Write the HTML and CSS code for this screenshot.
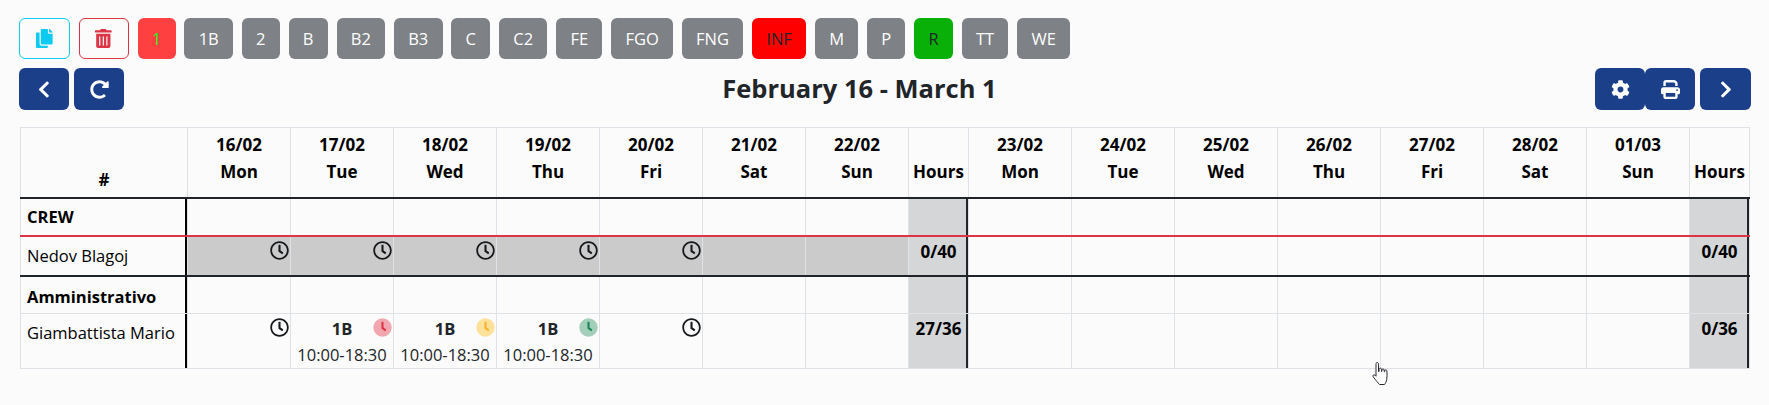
FILE: index.html
```html
<!DOCTYPE html>
<html lang="en">
<head>
  <meta charset="UTF-8">
  <meta name="viewport" content="width=device-width, initial-scale=1">
  <title>Shift planner</title>
  <link rel="stylesheet" href="styles.css">
</head>
<body>
  <svg class="sprite" xmlns="http://www.w3.org/2000/svg">
    <symbol id="i-clock" viewBox="0 0 512 512"><path d="M256 8C119 8 8 119 8 256s111 248 248 248 248-111 248-248S393 8 256 8zm0 448c-110.500 0-200-89.500-200-200S145.500 56 256 56s200 89.500 200 200-89.500 200-200 200zm61.800-104.400l-84.900-61.700c-3.100-2.300-4.900-5.900-4.900-9.700V116c0-6.600 5.400-12 12-12h32c6.600 0 12 5.400 12 12v141.700l66.800 48.600c5.400 3.900 6.500 11.400 2.600 16.800L334.600 349c-3.900 5.300-11.400 6.500-16.800 2.600z"/></symbol>
    <symbol id="i-dot" viewBox="0 0 512 512"><circle class="dot-bg" cx="256" cy="256" r="248"/><path class="dot-hands" d="M317.800 351.600l-84.900-61.700c-3.100-2.300-4.900-5.900-4.900-9.700V116c0-6.600 5.400-12 12-12h32c6.600 0 12 5.400 12 12v141.700l66.800 48.600c5.400 3.900 6.500 11.400 2.600 16.800L334.600 349c-3.900 5.300-11.400 6.500-16.800 2.600z"/></symbol>
  </svg>

  <div class="page">
    <div class="codes">
      <button class="btn btn-copy"><svg class="ico" viewBox="0 0 448 512"><path d="M320 448v40c0 13.255-10.745 24-24 24H24c-13.255 0-24-10.745-24-24V120c0-13.255 10.745-24 24-24h72v296c0 30.879 25.121 56 56 56h168zm0-344V0H152c-13.255 0-24 10.745-24 24v368c0 13.255 10.745 24 24 24h272c13.255 0 24-10.745 24-24V128H344c-13.200 0-24-10.800-24-24zm120.971-31.029L375.029 7.029A24 24 0 0 0 358.059 0H352v96h96v-6.059a24 24 0 0 0-7.029-16.970z"/></svg></button>
      <button class="btn btn-trash"><svg class="ico" viewBox="0 0 448 512"><path d="M32 464a48 48 0 0 0 48 48h288a48 48 0 0 0 48-48V128H32zm272-256a16 16 0 0 1 32 0v224a16 16 0 0 1-32 0zm-96 0a16 16 0 0 1 32 0v224a16 16 0 0 1-32 0zm-96 0a16 16 0 0 1 32 0v224a16 16 0 0 1-32 0zM432 32H312l-9.400-18.700A24 24 0 0 0 281.100 0H166.800a23.720 23.720 0 0 0-21.400 13.300L136 32H16A16 16 0 0 0 0 48v32a16 16 0 0 0 16 16h416a16 16 0 0 0 16-16V48a16 16 0 0 0-16-16z"/></svg></button>
      <button class="btn code code-one">1</button>
      <button class="btn code">1B</button>
      <button class="btn code">2</button>
      <button class="btn code">B</button>
      <button class="btn code">B2</button>
      <button class="btn code">B3</button>
      <button class="btn code">C</button>
      <button class="btn code">C2</button>
      <button class="btn code">FE</button>
      <button class="btn code">FGO</button>
      <button class="btn code">FNG</button>
      <button class="btn code code-inf">INF</button>
      <button class="btn code">M</button>
      <button class="btn code">P</button>
      <button class="btn code code-r">R</button>
      <button class="btn code">TT</button>
      <button class="btn code">WE</button>
    </div>

    <div class="nav">
      <div class="nav-group">
        <button class="btn btn-nav"><svg class="ico" viewBox="0 0 320 512"><path d="M34.520 239.030L228.870 44.690c9.370-9.370 24.570-9.370 33.940 0l22.670 22.670c9.360 9.360 9.370 24.520.04 33.900L131.490 256l154.020 154.750c9.340 9.380 9.320 24.540-.04 33.900l-22.670 22.670c-9.370 9.370-24.570 9.370-33.940 0L34.520 272.970c-9.370-9.370-9.370-24.570 0-33.940z"/></svg></button>
        <button class="btn btn-nav"><svg class="ico" viewBox="0 0 512 512"><path d="M256.455 8c66.269.119 126.437 26.233 170.859 68.685l35.715-35.715C478.149 25.851 504 36.559 504 57.941V192c0 13.255-10.745 24-24 24H345.941c-21.382 0-32.090-25.851-16.971-40.971l41.750-41.750c-30.864-28.899-70.801-44.907-113.230-45.273-92.398-.798-170.283 73.977-169.484 169.442C88.764 348.009 162.184 424 256 424c41.127 0 79.997-14.678 110.629-41.556 4.743-4.161 11.906-3.908 16.368.553l39.662 39.662c4.872 4.872 4.631 12.815-.482 17.433C378.202 479.813 319.926 504 256 504 119.034 504 8.001 392.967 8 256.002 7.999 119.193 119.646 7.755 256.455 8z"/></svg></button>
      </div>
      <h4 class="title">February 16 - March 1</h4>
      <div class="nav-group nav-right">
        <button class="btn btn-nav"><svg class="ico" viewBox="0 0 512 512"><path d="M487.400 315.700l-42.600-24.600c4.300-23.200 4.300-47 0-70.200l42.600-24.600c4.900-2.800 7.100-8.600 5.500-14-11.100-35.600-30-67.800-54.700-94.600-3.800-4.100-10-5.100-14.800-2.300L380.800 110c-17.900-15.400-38.500-27.300-60.800-35.100V25.800c0-5.600-3.900-10.500-9.400-11.700-36.700-8.200-74.300-7.800-109.200 0-5.500 1.200-9.400 6.100-9.400 11.700V75c-22.200 7.900-42.800 19.800-60.800 35.100L88.700 85.500c-4.900-2.800-11-1.900-14.800 2.300-24.700 26.700-43.600 58.900-54.700 94.600-1.700 5.400.6 11.200 5.500 14L67.300 221c-4.300 23.200-4.300 47 0 70.200l-42.600 24.600c-4.900 2.800-7.100 8.600-5.500 14 11.100 35.600 30 67.800 54.700 94.600 3.800 4.100 10 5.100 14.800 2.300l42.600-24.600c17.900 15.400 38.500 27.300 60.800 35.100v49.200c0 5.600 3.900 10.500 9.400 11.700 36.700 8.200 74.300 7.800 109.200 0 5.500-1.200 9.400-6.100 9.400-11.700v-49.200c22.200-7.900 42.800-19.800 60.800-35.100l42.600 24.600c4.900 2.800 11 1.900 14.800-2.300 24.700-26.700 43.600-58.900 54.700-94.600 1.500-5.500-.7-11.300-5.600-14.100zM256 336c-44.100 0-80-35.900-80-80s35.900-80 80-80 80 35.900 80 80-35.900 80-80 80z"/></svg></button>
        <button class="btn btn-nav"><svg class="ico" viewBox="0 0 512 512"><path d="M128 0C92.700 0 64 28.700 64 64v96h64V64H354.700L384 93.300V160h64V93.300c0-17-6.700-33.300-18.700-45.300L400 18.700C388 6.700 371.700 0 354.700 0H128zM384 352v32 64H128V384 368 352H384zm64 32h32c17.700 0 32-14.300 32-32V256c0-35.300-28.700-64-64-64H64c-35.300 0-64 28.700-64 64v96c0 17.700 14.300 32 32 32H64v64c0 35.300 28.700 64 64 64H384c35.300 0 64-28.700 64-64V384zM432 248a24 24 0 1 1 0 48 24 24 0 1 1 0-48z"/></svg></button>
        <button class="btn btn-nav btn-next"><svg class="ico" viewBox="0 0 320 512"><path d="M285.476 272.971L91.132 467.314c-9.373 9.373-24.569 9.373-33.941 0l-22.667-22.667c-9.357-9.357-9.375-24.522-.04-33.901L188.505 256 34.484 101.255c-9.335-9.379-9.317-24.544.04-33.901l22.667-22.667c9.373-9.373 24.569-9.373 33.941 0L285.475 239.030c9.373 9.372 9.373 24.568.001 33.941z"/></svg></button>
      </div>
    </div>

    <table class="planner">
      <colgroup>
        <col class="col-name">
        <col class="col-day"><col class="col-day"><col class="col-day"><col class="col-day"><col class="col-day"><col class="col-day"><col class="col-day">
        <col class="col-hours">
        <col class="col-day"><col class="col-day"><col class="col-day"><col class="col-day"><col class="col-day"><col class="col-day"><col class="col-day">
        <col class="col-hours-end">
      </colgroup>
      <thead>
        <tr>
          <th class="hash">#</th>
          <th>16/02<br>Mon</th><th>17/02<br>Tue</th><th>18/02<br>Wed</th><th>19/02<br>Thu</th><th>20/02<br>Fri</th><th>21/02<br>Sat</th><th>22/02<br>Sun</th>
          <th class="tot-head">Hours</th>
          <th>23/02<br>Mon</th><th>24/02<br>Tue</th><th>25/02<br>Wed</th><th>26/02<br>Thu</th><th>27/02<br>Fri</th><th>28/02<br>Sat</th><th>01/03<br>Sun</th>
          <th class="tot-head">Hours</th>
        </tr>
      </thead>
      <tbody>
        <tr class="group group-red">
          <td class="name">CREW</td>
          <td></td><td></td><td></td><td></td><td></td><td></td><td></td>
          <td class="tot"></td>
          <td></td><td></td><td></td><td></td><td></td><td></td><td></td>
          <td class="tot"></td>
        </tr>
        <tr class="person person-end">
          <td class="name">Nedov Blagoj</td>
          <td class="off"><svg class="clock"><use href="#i-clock"/></svg></td>
          <td class="off"><svg class="clock"><use href="#i-clock"/></svg></td>
          <td class="off"><svg class="clock"><use href="#i-clock"/></svg></td>
          <td class="off"><svg class="clock"><use href="#i-clock"/></svg></td>
          <td class="off"><svg class="clock"><use href="#i-clock"/></svg></td>
          <td class="off"></td><td class="off"></td>
          <td class="tot">0/40</td>
          <td></td><td></td><td></td><td></td><td></td><td></td><td></td>
          <td class="tot">0/40</td>
        </tr>
        <tr class="group group-low">
          <td class="name">Amministrativo</td>
          <td></td><td></td><td></td><td></td><td></td><td></td><td></td>
          <td class="tot"></td>
          <td></td><td></td><td></td><td></td><td></td><td></td><td></td>
          <td class="tot"></td>
        </tr>
        <tr class="person person-tall">
          <td class="name">Giambattista Mario</td>
          <td><svg class="clock"><use href="#i-clock"/></svg></td>
          <td><svg class="clock dot-red"><use href="#i-dot"/></svg><b class="shift">1B</b><span class="time">10:00-18:30</span></td>
          <td><svg class="clock dot-yellow"><use href="#i-dot"/></svg><b class="shift">1B</b><span class="time">10:00-18:30</span></td>
          <td><svg class="clock dot-green"><use href="#i-dot"/></svg><b class="shift">1B</b><span class="time">10:00-18:30</span></td>
          <td><svg class="clock"><use href="#i-clock"/></svg></td>
          <td></td><td></td>
          <td class="tot">27/36</td>
          <td></td><td></td><td></td><td></td><td></td><td></td><td></td>
          <td class="tot">0/36</td>
        </tr>
      </tbody>
    </table>
  </div>

  <svg class="pointer" viewBox="0 0 20 25"><path d="M6 1.500c1 0 1.500.7 1.500 1.700v7.300l.6-.1V8.200c0-1.500 2.200-1.500 2.300 0v2.200h.5V9c0-1.400 2.200-1.400 2.300 0v1.700h.5V9.800c.1-1.300 2.100-1.200 2.200.2.200 2.900.3 5.800-.2 8.500-.4 2.200-1.400 4-2.200 5H8.500c-1.500-1.700-3.200-3.600-6.300-7.700-.9-1.300.6-2.700 1.900-1.600l.9 1V3.200c0-1 .4-1.700 1-1.700z"/></svg>
</body>
</html>
```

FILE: styles.css
```css
* {
  box-sizing: border-box;
}
body {
  margin: 0;
  background: #fbfbfb;
  color: #212529;
  font-family: "Open Sans", "Noto Sans", sans-serif;
  font-size: 16.5px;
}
.sprite {
  display: none;
}
.page {
  padding: 18px 18px 0 19px;
  width: 1769px;
}

/* toolbar */
.codes {
  display: flex;
  gap: 8.8px;
}
.btn {
  height: 41px;
  min-width: 38px;
  border: 0;
  border-radius: 6px;
  font: inherit;
  padding: 0 14.25px;
  display: flex;
  align-items: center;
  justify-content: center;
}
.ico {
  height: 19px;
  fill: currentColor;
  display: block;
}
.code {
  background: #7e8185;
  color: #fff;
}
.code-one {
  background: #ff4040;
  color: #22ee22;
}
.code-inf {
  background: #ff0000;
  color: #212529;
}
.code-r {
  background: #08b008;
  color: #212529;
}
.btn-copy {
  width: 51px;
  border: 1px solid #0dcaf0;
  color: #0dcaf0;
  background: none;
}
.btn-trash {
  width: 50px;
  border: 1px solid #dc3545;
  color: #dc3545;
  background: none;
}

.nav {
  display: flex;
  align-items: center;
  margin-top: 9px;
}
.nav-group {
  display: flex;
  gap: 5px;
}
.nav-right {
  gap: 0;
}
.btn-nav {
  width: 50px;
  height: 42px;
  background: #1c3f8a;
  color: #fff;
}
.btn-next {
  width: 51px;
  margin-left: 5px;
}
.title {
  flex: 1;
  margin: 0;
  padding-bottom: 2px;
  text-align: center;
  font-size: 25.5px;
  font-weight: 700;
}

/* planner table */
.planner {
  border-collapse: collapse;
  table-layout: fixed;
  width: 1730px;
  margin: 17px 0 0 1px;
}
.col-name {
  width: 167px;
}
.col-day {
  width: 103px;
}
.col-hours {
  width: 60px;
}
.col-hours-end {
  width: 60px;
}
.planner th,
.planner td {
  border: 1px solid #dee2e6;
  position: relative;
  padding: 0;
}
.planner th {
  height: 70px;
  color: #000;
  font-size: 17px;
  font-weight: 700;
  line-height: 27px;
  text-align: center;
  vertical-align: bottom;
  padding-bottom: 12px;
  border-bottom: 2px solid #212529;
}
.planner th.hash {
  padding-bottom: 4px;
}
/* thick dividers sit just inside the cell edge */
.planner td:first-child {
  box-shadow: inset -2px 0 0 #000;
}
.planner td:nth-child(9),
.planner td:nth-child(17) {
  box-shadow: inset -2px 0 0 #212529;
}
.group td {
  height: 38px;
}
.group-red td {
  border-bottom: 2px solid #dc3545;
}
.person td {
  height: 40px;
}
.person-end td {
  border-bottom: 2px solid #212529;
}
.person-tall td {
  height: 54px;
  vertical-align: top;
  padding-top: 3px;
}
.planner .name {
  padding-left: 6px;
  color: #000;
}
.person-tall .name {
  padding-top: 7px;
}
.group .name {
  font-weight: 700;
}
.group-low .name {
  padding-top: 3px;
}
.off {
  background: #cbcbcb;
}
.planner .tot {
  background: #d5d6d8;
  color: #000;
  font-weight: 700;
  font-size: 17px;
  text-align: center;
  vertical-align: top;
  padding-top: 3px;
}
.clock {
  position: absolute;
  top: 4px;
  right: 1px;
  width: 19px;
  height: 19px;
  fill: #16181b;
}
.dot-red {
  --bg: #f1a7b0;
  --hand: #dc3545;
}
.dot-yellow {
  --bg: #fde19a;
  --hand: #f5b32a;
}
.dot-green {
  --bg: #a3ceb9;
  --hand: #198754;
}
.dot-bg {
  fill: var(--bg);
}
.dot-hands {
  fill: var(--hand);
}
.shift {
  display: block;
  text-align: center;
  font-weight: 700;
  line-height: 24px;
}
.time {
  display: block;
  text-align: center;
  line-height: 27px;
}

/* mouse cursor caught in the capture */
.pointer {
  position: absolute;
  left: 1371px;
  top: 361px;
  width: 20px;
  height: 25px;
  fill: #fff;
  stroke: #2b2b33;
  stroke-width: 1;
}
```
